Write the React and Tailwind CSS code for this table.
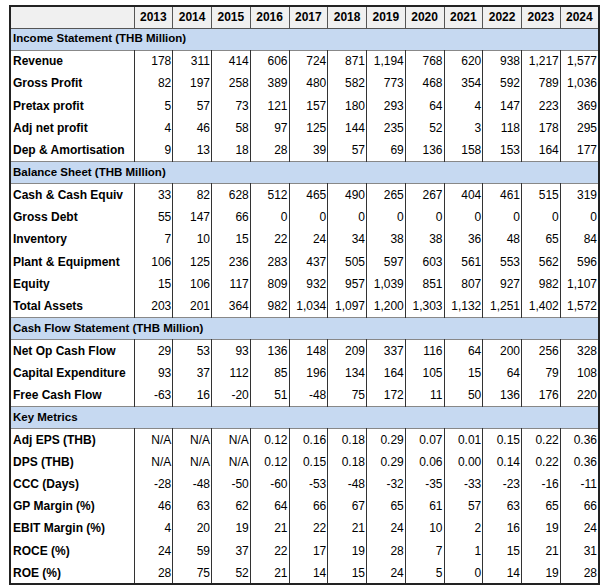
import React from "react";

const years = [2013, 2014, 2015, 2016, 2017, 2018, 2019, 2020, 2021, 2022, 2023, 2024];

const sections = [
  {
    title: "Income Statement (THB Million)",
    rows: [
      ["Revenue", "178 311 414 606 724 871 1,194 768 620 938 1,217 1,577"],
      ["Gross Profit", "82 197 258 389 480 582 773 468 354 592 789 1,036"],
      ["Pretax profit", "5 57 73 121 157 180 293 64 4 147 223 369"],
      ["Adj net profit", "4 46 58 97 125 144 235 52 3 118 178 295"],
      ["Dep & Amortisation", "9 13 18 28 39 57 69 136 158 153 164 177"],
    ],
  },
  {
    title: "Balance Sheet (THB Million)",
    rows: [
      ["Cash & Cash Equiv", "33 82 628 512 465 490 265 267 404 461 515 319"],
      ["Gross Debt", "55 147 66 0 0 0 0 0 0 0 0 0"],
      ["Inventory", "7 10 15 22 24 34 38 38 36 48 65 84"],
      ["Plant & Equipment", "106 125 236 283 437 505 597 603 561 553 562 596"],
      ["Equity", "15 106 117 809 932 957 1,039 851 807 927 982 1,107"],
      ["Total Assets", "203 201 364 982 1,034 1,097 1,200 1,303 1,132 1,251 1,402 1,572"],
    ],
  },
  {
    title: "Cash Flow Statement (THB Million)",
    rows: [
      ["Net Op Cash Flow", "29 53 93 136 148 209 337 116 64 200 256 328"],
      ["Capital Expenditure", "93 37 112 85 196 134 164 105 15 64 79 108"],
      ["Free Cash Flow", "-63 16 -20 51 -48 75 172 11 50 136 176 220"],
    ],
  },
  {
    title: "Key Metrics",
    rows: [
      ["Adj EPS (THB)", "N/A N/A N/A 0.12 0.16 0.18 0.29 0.07 0.01 0.15 0.22 0.36"],
      ["DPS (THB)", "N/A N/A N/A 0.12 0.15 0.18 0.29 0.06 0.00 0.14 0.22 0.36"],
      ["CCC (Days)", "-28 -48 -50 -60 -53 -48 -32 -35 -33 -23 -16 -11"],
      ["GP Margin (%)", "46 63 62 64 66 67 65 61 57 63 65 66"],
      ["EBIT Margin (%)", "4 20 19 21 22 21 24 10 2 16 19 24"],
      ["ROCE (%)", "24 59 37 22 17 19 28 7 1 15 21 31"],
      ["ROE (%)", "28 75 52 21 14 15 24 5 0 14 19 28"],
    ],
  },
];

export default function App() {
  return (
    <div className="pt-[5px] pl-[9px] bg-white min-h-[586px] font-['Liberation_Sans',Arial,sans-serif] text-[12px] text-black">
      <table className="w-[591px] table-fixed border-collapse border-2 border-[#222]">
        <colgroup>
          <col className="w-[124px]" />
          {years.map((y) => (
            <col key={y} />
          ))}
        </colgroup>
        <thead>
          <tr className="h-[22px] bg-[#f0f0f0]">
            <th className="border border-[#555]"></th>
            {years.map((y) => (
              <th key={y} className="border border-[#555] font-bold text-center">
                {y}
              </th>
            ))}
          </tr>
        </thead>
        <tbody>
          {sections.map((s) => (
            <React.Fragment key={s.title}>
              <tr className="h-[22px] bg-[#c6d9f1] border-y border-[#888]">
                <td colSpan={13} className="font-bold text-[11.5px] pl-[2px] text-left">
                  {s.title}
                </td>
              </tr>
              {s.rows.map(([label, vals]) => (
                <tr key={label} className="h-[22.3px]">
                  <td className="font-bold pl-[2px] border-r border-[#333] whitespace-nowrap">
                    {label}
                  </td>
                  {vals.split(" ").map((v, i) => (
                    <td key={i} className="text-right pr-[1px] border-r border-[#333]">
                      {v}
                    </td>
                  ))}
                </tr>
              ))}
            </React.Fragment>
          ))}
        </tbody>
      </table>
    </div>
  );
}
